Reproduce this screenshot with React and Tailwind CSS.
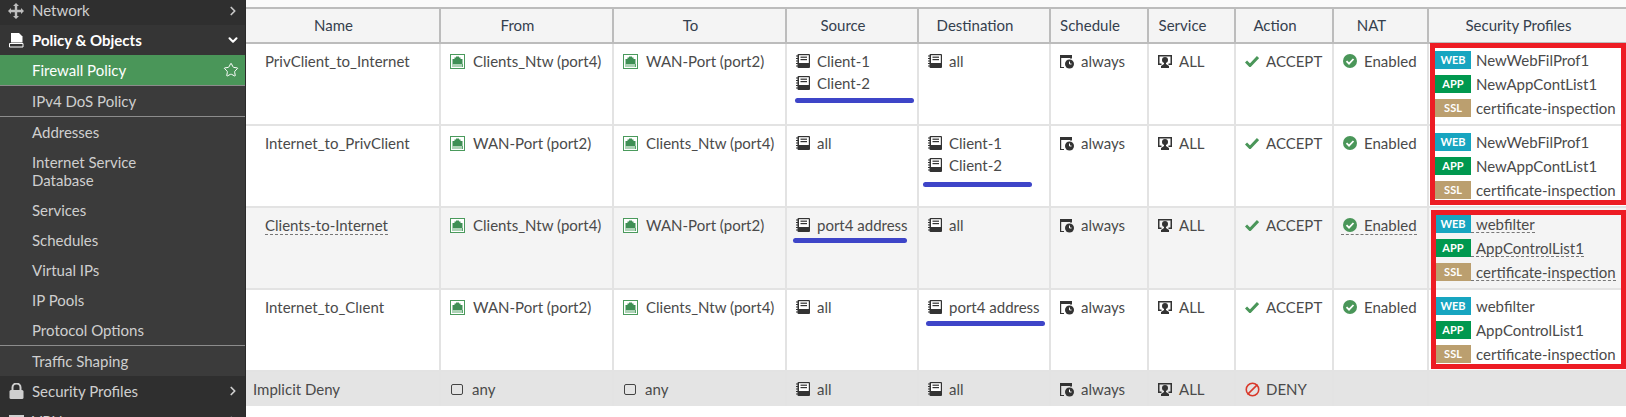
import React from "react";
import { ChevronRight, ChevronDown, Star, Ban } from "lucide-react";

const COLS = "grid-cols-[193px_173px_173px_132px_132px_98px_87px_98px_95px_199px]";

function Book() {
  return (
    <svg width="14" height="14" viewBox="0 0 14 14" className="shrink-0">
      <rect x="1.500" y="0" width="12.500" height="14" rx="1" fill="#333" />
      <rect x="3" y="1.200" width="9.800" height="7.800" fill="#fff" />
      <rect x="4.500" y="2.600" width="6.500" height="1.200" fill="#333" />
      <rect x="4.500" y="5" width="6.500" height="1.200" fill="#333" />
      <g fill="#333"><rect x="0" y="1.500" width="2" height="1" /><rect x="0" y="4" width="2" height="1" /><rect x="0" y="6.500" width="2" height="1" /><rect x="0" y="9" width="2" height="1" /><rect x="0" y="11.500" width="2" height="1" /></g>
    </svg>
  );
}
function PortIcon() {
  return (
    <svg width="15" height="15" viewBox="0 0 15 15" className="shrink-0">
      <rect x="0.500" y="0.500" width="14" height="14" fill="#fff" stroke="#4a9a5c" />
      <path d="M2.500 5h2V3.500h1.500V2.500h3v1H10.500V5h2v5h-10z" fill="#3f8f55" />
      <path d="M3 10v3M5 10v3M7 10v3M9 10v3M11 10v3M12.500 10v3" stroke="#5aa66d" />
    </svg>
  );
}
function ScheduleIcon() {
  return (
    <svg width="14" height="15" viewBox="0 0 14 15" className="shrink-0">
      <path d="M0 1h12v3H1.200v9H4v1H0z" fill="#333" />
      <path d="M11 3v2" stroke="#333" />
      <circle cx="9.500" cy="10" r="4.500" fill="#333" />
      <path d="M9.500 7.500V10h2" stroke="#fff" fill="none" />
    </svg>
  );
}
function ServiceIcon() {
  return (
    <svg width="14" height="15" viewBox="0 0 14 15" className="shrink-0">
      <path d="M0 1h14v10h-3.500V9.500h2V2.500h-11v7h2V11H0z" fill="#333" />
      <circle cx="7" cy="6" r="3" fill="#333" />
      <path d="M6 8h2v2l3 2v2H3v-2l3-2z" fill="#333" />
    </svg>
  );
}
function MoveIcon() {
  return (
    <svg width="16" height="16" viewBox="0 0 16 16" className="shrink-0" fill="#bdbdbd">
      <path d="M8 0l3 3H9.200v3.800H13V5l3 3-3 3V9.200H9.200V13H11l-3 3-3-3h1.800V9.200H3V11L0 8l3-3v1.800h3.800V3H5z" />
    </svg>
  );
}
function PolicyIcon() {
  return (
    <svg width="15" height="15" viewBox="0 0 15 15" className="shrink-0">
      <path d="M2 0h8l3.500 3.500V9.500H2z" fill="#fff" />
      <path d="M0.500 10.500h13.500v3.500H0.500z" fill="none" stroke="#fff" />
    </svg>
  );
}
function LockIcon() {
  return (
    <svg width="15" height="16" viewBox="0 0 15 16" className="shrink-0">
      <path d="M3.500 7V4.500a4 4 0 0 1 8 0V7" fill="none" stroke="#cfcfcf" strokeWidth="2" />
      <rect x="0.500" y="7" width="14" height="9" rx="1.500" fill="#cfcfcf" />
    </svg>
  );
}
function CheckIcon() {
  return (
    <svg width="14" height="12" viewBox="0 0 14 12" className="shrink-0">
      <path d="M1 6.500l4 4L13 2" fill="none" stroke="#4a9659" strokeWidth="3" />
    </svg>
  );
}
function EnabledIcon() {
  return (
    <svg width="14" height="14" viewBox="0 0 14 14" className="shrink-0">
      <circle cx="7" cy="7" r="7" fill="#4a9659" />
      <path d="M3.500 7.200l2.500 2.500 4.500-4.700" fill="none" stroke="#fff" strokeWidth="1.800" />
    </svg>
  );
}

function Sidebar() {
  const plain = "h-[30px] flex items-center pl-[32px] text-[#cfcfcf]";
  return (
    <aside className="w-[246px] shrink-0 h-[417px] overflow-hidden bg-[#3b3b3b] border-r border-[#2a2a2a] text-[15px]">
      <div className="h-[25px] pb-1 bg-[#2f2f2f] flex items-center pl-2 pr-[5px] text-[#cfcfcf]">
        <MoveIcon /><span className="ml-[8px] flex-1">Network</span><ChevronRight size={14} strokeWidth={3} className="text-[#c8c8c8]" />
      </div>
      <div className="h-[30px] bg-[#353535] flex items-center pl-[9px] pr-[5px] text-white font-bold">
        <PolicyIcon /><span className="ml-[8px] flex-1">Policy &amp; Objects</span><ChevronDown size={14} strokeWidth={3.500} />
      </div>
      <div className="h-[30px] bg-[#4a9659] text-white flex items-center pl-[32px] pr-[6px]">
        <span className="flex-1">Firewall Policy</span><Star size={16} strokeWidth={1.500} />
      </div>
      <div className="h-px bg-[#8c8c8c]" />
      <div className={plain}>IPv4 DoS Policy</div>
      <div className="h-px bg-[#8c8c8c]" />
      <div className={plain}>Addresses</div>
      <div className="h-[48px] flex items-center pl-[32px] leading-[18px] text-[#cfcfcf]"><span>Internet Service<br />Database</span></div>
      <div className={plain}>Services</div>
      <div className={plain}>Schedules</div>
      <div className={plain}>Virtual IPs</div>
      <div className={plain}>IP Pools</div>
      <div className={plain}>Protocol Options</div>
      <div className="h-px bg-[#8c8c8c]" />
      <div className={plain}>Traffic Shaping</div>
      <div className="h-[30px] bg-[#2f2f2f] flex items-center pl-[9px] pr-[5px] text-[#cfcfcf]">
        <LockIcon /><span className="ml-[8px] flex-1">Security Profiles</span><ChevronRight size={14} strokeWidth={3} />
      </div>
      <div className="h-[30px] bg-[#2f2f2f] flex items-center pl-[9px] pr-[5px] text-[#cfcfcf]">
        <span className="w-[15px] h-[13px] border-2 border-[#cfcfcf]" /><span className="ml-[8px] flex-1">VPN</span><ChevronRight size={14} strokeWidth={3} />
      </div>
    </aside>
  );
}

const Cell = ({ children, className = "" }) => (
  <div className={`border-l-2 border-[#e3e3e3] first:border-l-0 min-w-0 ${className}`}>{children}</div>
);

const IconText = ({ icon, children }) => (
  <div className="flex items-center h-[22px] whitespace-nowrap">
    {icon}
    {children}
  </div>
);

const Port = ({ name }) => (
  <div className="pl-[9px] pt-[6px]"><IconText icon={<PortIcon />}><span className="ml-[8px]">{name}</span></IconText></div>
);

const Addr = ({ items, line }) => (
  <div className="pl-[9px] pt-[6px]">
    {items.map((t) => (
      <IconText key={t} icon={<Book />}><span className="ml-[7px]">{t}</span></IconText>
    ))}
    {line && <div className={`h-[5px] rounded-full bg-[#3e45c8] ${line}`} />}
  </div>
);

const BADGE = { WEB: "bg-[#17a5c0]", APP: "bg-[#00984f]", SSL: "bg-[#bb9f6f]" };

function Profiles({ rows, dashed }) {
  return (
    <div className="pl-[6px] pt-[7px] flex flex-col gap-[6px]">
      {rows.map(([b, t]) => (
        <div key={b} className="flex items-center h-[18px] whitespace-nowrap">
          <span className={`w-[36px] h-[18px] flex items-center justify-center text-[11px] font-bold text-white ${BADGE[b]}`}>{b}</span>
          <span className={`pl-[5px] h-[18px] leading-[18px] ${dashed ? "border-b border-dashed border-[#777]" : ""}`}>{t}</span>
        </div>
      ))}
    </div>
  );
}

const Tail = ({ dashed }) => (
  <>
    <Cell className="pl-[9px] pt-[6px]"><IconText icon={<ScheduleIcon />}><span className="ml-[7px]">always</span></IconText></Cell>
    <Cell className="pl-[9px] pt-[6px]"><IconText icon={<ServiceIcon />}><span className="ml-[7px]">ALL</span></IconText></Cell>
    <Cell className="pl-[9px] pt-[6px]"><IconText icon={<CheckIcon />}><span className="ml-[7px]">ACCEPT</span></IconText></Cell>
    <Cell className="pl-[7px] pt-[6px]">
      <IconText>
        <span className={`inline-flex items-center pl-[2px] leading-[18px] ${dashed ? "border-b border-dashed border-[#777]" : ""}`}><EnabledIcon /><span className="ml-[7px]">Enabled</span></span>
      </IconText>
    </Cell>
  </>
);

const RULES = [
  { name: "PrivClient_to_Internet", from: "Clients_Ntw (port4)", to: "WAN-Port (port2)", src: ["Client-1", "Client-2"], dst: ["all"], srcLine: "w-[119px] mt-[4px] ml-[-1px]", prof: [["WEB", "NewWebFilProf1"], ["APP", "NewAppContList1"], ["SSL", "certificate-inspection"]] },
  { name: "Internet_to_PrivClient", from: "WAN-Port (port2)", to: "Clients_Ntw (port4)", src: ["all"], dst: ["Client-1", "Client-2"], dstLine: "w-[109px] mt-[6px] ml-[-5px]", prof: [["WEB", "NewWebFilProf1"], ["APP", "NewAppContList1"], ["SSL", "certificate-inspection"]] },
  { name: "Clients-to-Internet", from: "Clients_Ntw (port4)", to: "WAN-Port (port2)", src: ["port4 address"], dst: ["all"], srcLine: "w-[114px] mt-[2px] ml-[-3px]", dashed: true, prof: [["WEB", "webfilter"], ["APP", "AppControlList1"], ["SSL", "certificate-inspection"]] },
  { name: "Internet_to_Clıent", from: "WAN-Port (port2)", to: "Clients_Ntw (port4)", src: ["all"], dst: ["port4 address"], dstLine: "w-[119px] mt-[3px] ml-[-2px]", prof: [["WEB", "webfilter"], ["APP", "AppControlList1"], ["SSL", "certificate-inspection"]] },
];

export default function App() {
  const heads = ["Name", "From", "To", "Source", "Destination", "Schedule", "Service", "Action", "NAT", "Security Profiles"];
  return (
    <div className="flex w-[1626px] h-[417px] overflow-hidden bg-white text-[15px] text-[#4a4a4a] font-['Lato',sans-serif]">
      <Sidebar />
      <main className="flex-1 min-w-0 relative bg-white">
        <div className="h-[7px] bg-[#fafafa]" />
        <div className={`grid ${COLS} h-[37px] bg-[#f4f4f4] border-y-2 border-[#bcbcbc] text-[#34404e] text-center`}>
          {heads.map((h) => (
            <div key={h} className="border-l-2 border-[#bcbcbc] first:border-l-0 flex items-center justify-center pr-[18px]">{h}</div>
          ))}
        </div>
        {RULES.map((r) => (
          <div key={r.name} className={`grid ${COLS} h-[82px] border-b-2 border-[#e3e3e3] ${r.dashed ? "bg-[#f4f4f4]" : "bg-white"}`}>
            <Cell className="pl-[19px] pt-[6px]">
              <div className="h-[22px] flex items-center"><span className={r.dashed ? "border-b border-dashed border-[#777] leading-[18px]" : ""}>{r.name}</span></div>
            </Cell>
            <Cell><Port name={r.from} /></Cell>
            <Cell><Port name={r.to} /></Cell>
            <Cell><Addr items={r.src} line={r.srcLine} /></Cell>
            <Cell><Addr items={r.dst} line={r.dstLine} /></Cell>
            <Tail dashed={r.dashed} />
            <Cell><Profiles rows={r.prof} dashed={r.dashed} /></Cell>
          </div>
        ))}
        <div className={`grid ${COLS} h-[34px] bg-[#e4e4e4]`}>
          <div className="pl-[7px] flex items-center">Implicit Deny</div>
          {["any", "any"].map((t, i) => (
            <Cell key={i} className="pl-[10px] flex items-center border-[#dcdcdc]"><span className="w-[12px] h-[11px] border border-[#444] rounded-[2px]" /><span className="ml-[9px]">{t}</span></Cell>
          ))}
          {["all", "all"].map((t, i) => (
            <Cell key={"a" + i} className="pl-[9px] flex items-center border-[#dcdcdc]"><Book /><span className="ml-[7px]">{t}</span></Cell>
          ))}
          <Cell className="pl-[9px] flex items-center border-[#dcdcdc]"><ScheduleIcon /><span className="ml-[7px]">always</span></Cell>
          <Cell className="pl-[9px] flex items-center border-[#dcdcdc]"><ServiceIcon /><span className="ml-[7px]">ALL</span></Cell>
          <Cell className="pl-[9px] flex items-center border-[#dcdcdc]"><Ban size={15} strokeWidth={2.500} className="text-[#d9392b] -scale-x-100 shrink-0" /><span className="ml-[6px]">DENY</span></Cell>
          <Cell className="border-[#dcdcdc]" />
          <Cell className="border-[#dcdcdc]" />
        </div>
        <div className="absolute left-[1184px] top-[43px] w-[196px] h-[162px] border-[5px] border-[#ed1c24]" />
        <div className="absolute left-[1185px] top-[210px] w-[195px] h-[159px] border-[5px] border-[#ed1c24]" />
      </main>
    </div>
  );
}
